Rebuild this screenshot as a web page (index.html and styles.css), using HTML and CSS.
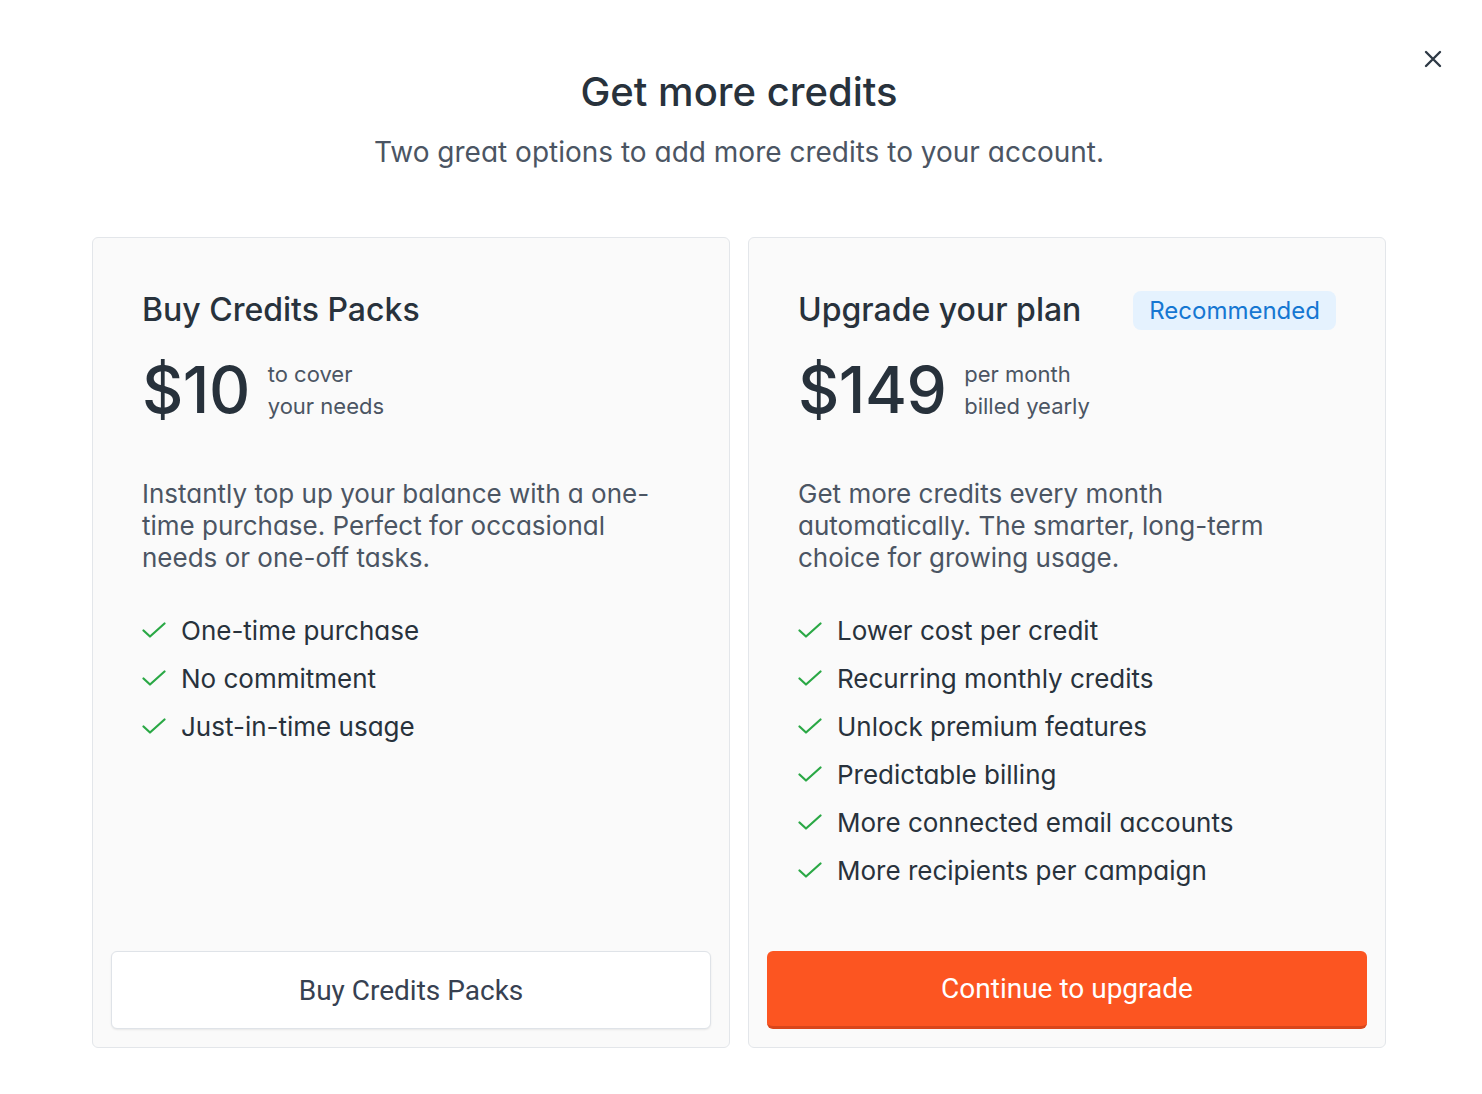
FILE: index.html
```html
<!DOCTYPE html>
<html lang="en">
<head>
  <meta charset="UTF-8" />
  <meta name="viewport" content="width=device-width, initial-scale=1.0"/>
  <title>Get more credits</title>
  <link rel="stylesheet" href="styles.css">
</head>
<body>
  <div class="modal">
    <button class="close" aria-label="Close">
      <svg width="20" height="20" viewBox="0 0 20 20"><path d="M3 3 L17 17 M17 3 L3 17" stroke="#2f3a46" stroke-width="2.4" stroke-linecap="round"/></svg>
    </button>

    <div class="header">
      <h1>Get more credits</h1>
      <p class="subtitle">Two great options to add more credits to your account.</p>
    </div>

    <div class="cards">
      <div class="card">
        <div class="card-body">
          <div class="card-head">
            <h2>Buy Credits Packs</h2>
          </div>
          <div class="price-row">
            <span class="price">$10</span>
            <span class="price-note">to cover<br>your needs</span>
          </div>
          <p class="desc">Instantly top up your balance with a one-time purchase. Perfect for occasional needs or one-off tasks.</p>
          <ul class="features">
            <li><svg class="check" viewBox="0 0 24 24"><polyline points="1.5 12.5 8 18.5 22.5 5.5"/></svg>One-time purchase</li>
            <li><svg class="check" viewBox="0 0 24 24"><polyline points="1.5 12.5 8 18.5 22.5 5.5"/></svg>No commitment</li>
            <li><svg class="check" viewBox="0 0 24 24"><polyline points="1.5 12.5 8 18.5 22.5 5.5"/></svg>Just-in-time usage</li>
          </ul>
        </div>
        <button class="btn btn-outline">Buy Credits Packs</button>
      </div>

      <div class="card">
        <div class="card-body">
          <div class="card-head">
            <h2>Upgrade your plan</h2>
            <span class="badge">Recommended</span>
          </div>
          <div class="price-row">
            <span class="price">$149</span>
            <span class="price-note">per month<br>billed yearly</span>
          </div>
          <p class="desc">Get more credits every month automatically. The smarter, long-term choice for growing usage.</p>
          <ul class="features">
            <li><svg class="check" viewBox="0 0 24 24"><polyline points="1.5 12.5 8 18.5 22.5 5.5"/></svg>Lower cost per credit</li>
            <li><svg class="check" viewBox="0 0 24 24"><polyline points="1.5 12.5 8 18.5 22.5 5.5"/></svg>Recurring monthly credits</li>
            <li><svg class="check" viewBox="0 0 24 24"><polyline points="1.5 12.5 8 18.5 22.5 5.5"/></svg>Unlock premium features</li>
            <li><svg class="check" viewBox="0 0 24 24"><polyline points="1.5 12.5 8 18.5 22.5 5.5"/></svg>Predictable billing</li>
            <li><svg class="check" viewBox="0 0 24 24"><polyline points="1.5 12.5 8 18.5 22.5 5.5"/></svg>More connected email accounts</li>
            <li><svg class="check" viewBox="0 0 24 24"><polyline points="1.5 12.5 8 18.5 22.5 5.5"/></svg>More recipients per campaign</li>
          </ul>
        </div>
        <button class="btn btn-primary">Continue to upgrade</button>
      </div>
    </div>
  </div>
</body>
</html>
```

FILE: styles.css
```css
body {
  margin: 0;
  background: #ffffff;
  font-family: Inter, 'Noto Sans', sans-serif;
  color: #28323c;
}

.modal {
  position: relative;
  width: 1294px;
  margin-left: 92px;
  padding-top: 68px;
}

.close {
  position: absolute;
  top: 49px;
  right: -57px;
  background: none;
  border: none;
  padding: 0;
  cursor: pointer;
}

.header {
  text-align: center;
}

h1 {
  margin: 0;
  font-size: 40px;
  line-height: 48px;
  font-weight: 500;
  color: #28323c;
}

.subtitle {
  margin: 18px 0 0;
  font-size: 28px;
  line-height: 36px;
  color: #4b5563;
  font-feature-settings: "cv11";
}

.cards {
  display: grid;
  grid-template-columns: 1fr 1fr;
  gap: 18px;
  margin-top: 67px;
}

.card {
  display: flex;
  flex-direction: column;
  padding: 18px;
  background: #fafafa;
  border: 1px solid #e3e6ea;
  border-radius: 6px;
}

.card-body {
  padding: 34px 31px 57px;
}

.card-head {
  display: flex;
  justify-content: space-between;
  align-items: center;
}

h2 {
  margin: 0;
  font-size: 32px;
  line-height: 40px;
  font-weight: 500;
  color: #28323c;
}

.badge {
  background: #e5f2fe;
  color: #1677d2;
  font-size: 24px;
  line-height: 39px;
  padding: 0 16px;
  border-radius: 8px;
}

.price-row {
  display: flex;
  align-items: center;
  gap: 18px;
  margin-top: 26px;
}

.price {
  font-size: 64px;
  line-height: 68px;
  font-weight: 500;
  letter-spacing: -0.5px;
  color: #27313b;
}

.price-note {
  font-size: 22px;
  line-height: 32px;
  color: #4b5563;
}

.desc {
  margin: 54px 0 0;
  font-size: 26px;
  line-height: 32px;
  color: #4b5563;
  font-feature-settings: "cv11";
}

.features {
  list-style: none;
  margin: 32px 0 0;
  padding: 0;
}

.features li {
  display: flex;
  align-items: center;
  gap: 15px;
  height: 48px;
  font-size: 26px;
  color: #28323c;
  font-feature-settings: "cv11";
}

.check {
  width: 24px;
  height: 24px;
  fill: none;
  stroke: #2aa845;
  stroke-width: 2.2;
  stroke-linecap: round;
  stroke-linejoin: round;
}

.btn {
  margin-top: auto;
  height: 78px;
  font-family: Roboto, 'Noto Sans', sans-serif;
  font-size: 28px;
  border-radius: 6px;
  cursor: pointer;
}

.btn-outline {
  background: #ffffff;
  color: #374151;
  border: 1px solid #dfe3e8;
  box-shadow: 0 1px 2px rgba(0, 0, 0, 0.08);
}

.btn-primary {
  background: #fc5521;
  color: #ffffff;
  border: none;
  border-bottom: 3px solid #d9461b;
}
```
